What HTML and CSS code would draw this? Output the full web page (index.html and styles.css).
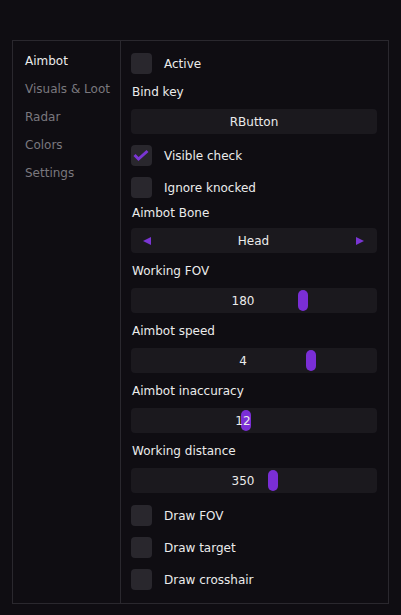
FILE: index.html
```html
<!DOCTYPE html>
<html>
<head>
<meta charset="utf-8">
<link rel="stylesheet" href="styles.css">
</head>
<body>
<div class="window">
  <nav class="sidebar">
    <div class="tab active">Aimbot</div>
    <div class="tab">Visuals &amp; Loot</div>
    <div class="tab">Radar</div>
    <div class="tab">Colors</div>
    <div class="tab">Settings</div>
  </nav>
  <main class="content">
    <div class="check"><span class="box"></span><span class="check-label">Active</span></div>
    <div class="group">
      <div class="field-label">Bind key</div>
      <div class="frame button">RButton</div>
    </div>
    <div class="check"><span class="box"><svg width="21" height="21" viewBox="0 0 21 21"><polyline points="3.5,10 7.5,14 16.5,6" fill="none" stroke="#7a35d3" stroke-width="3" stroke-linejoin="miter" stroke-linecap="butt"/></svg></span><span class="check-label">Visible check</span></div>
    <div class="check"><span class="box"></span><span class="check-label">Ignore knocked</span></div>
    <div class="group after-check combo-group">
      <div class="field-label">Aimbot Bone</div>
      <div class="frame combo">
        <svg class="arrow" width="8" height="8" viewBox="0 0 8 8"><polygon points="8,0 8,8 0,4" fill="#7a35d3"/></svg>
        <span>Head</span>
        <svg class="arrow" width="8" height="8" viewBox="0 0 8 8"><polygon points="0,0 0,8 8,4" fill="#7a35d3"/></svg>
      </div>
    </div>
    <div class="group">
      <div class="field-label">Working FOV</div>
      <div class="frame slider"><span class="thumb" style="left:167px"></span><span class="value">180</span></div>
    </div>
    <div class="group">
      <div class="field-label">Aimbot speed</div>
      <div class="frame slider"><span class="thumb" style="left:175px"></span><span class="value">4</span></div>
    </div>
    <div class="group">
      <div class="field-label">Aimbot inaccuracy</div>
      <div class="frame slider"><span class="thumb" style="left:110px"></span><span class="value">12</span></div>
    </div>
    <div class="group">
      <div class="field-label">Working distance</div>
      <div class="frame slider"><span class="thumb" style="left:137px"></span><span class="value">350</span></div>
    </div>
    <div class="check after-group"><span class="box"></span><span class="check-label">Draw FOV</span></div>
    <div class="check"><span class="box"></span><span class="check-label">Draw target</span></div>
    <div class="check"><span class="box"></span><span class="check-label">Draw crosshair</span></div>
  </main>
</div>
</body>
</html>
```

FILE: styles.css
```css
html, body {
  margin: 0;
  padding: 0;
  background: #0f0d12;
}
body {
  padding: 40px 12px 0 12px;
  font-family: "DejaVu Sans", sans-serif;
  font-size: 12px;
  color: #ebebeb;
}
.window {
  box-sizing: border-box;
  width: 377px;
  height: 564px;
  border: 1px solid #2a282e;
  background: #0f0d12;
  display: flex;
}
.sidebar {
  box-sizing: border-box;
  width: 108px;
  border-right: 1px solid #2a282e;
  padding: 13px 0 0 12px;
  display: flex;
  flex-direction: column;
  gap: 14px;
}
.tab {
  height: 14px;
  line-height: 14px;
  color: #7a787e;
  white-space: nowrap;
}
.tab.active {
  color: #ebebeb;
}
.content {
  flex: 1;
  padding: 12px 11px 0 10px;
  display: flex;
  flex-direction: column;
  gap: 11px;
}
.check {
  display: flex;
  align-items: center;
  height: 21px;
  gap: 12px;
}
.box {
  width: 21px;
  height: 21px;
  border-radius: 4px;
  background: #29272d;
  display: block;
}
.box svg {
  display: block;
}
.check-label {
  line-height: 14px;
}
.group {
  display: flex;
  flex-direction: column;
  gap: 10px;
}
.group.after-check {
  margin-top: -3px;
}
.group.combo-group {
  gap: 8px;
}
.check.after-group {
  margin-top: 1px;
}
.field-label {
  height: 14px;
  line-height: 14px;
  padding-left: 1px;
}
.frame {
  position: relative;
  height: 25px;
  border-radius: 4px;
  background: #1b191e;
  display: flex;
  align-items: center;
  justify-content: center;
}
.combo {
  justify-content: space-between;
  padding: 0 13px 0 12px;
}
.arrow {
  display: block;
}
.slider {
  padding-right: 22px;
}
.thumb {
  position: absolute;
  top: 2px;
  width: 10px;
  height: 21px;
  border-radius: 5px;
  background: #7a2ed6;
}
.value {
  position: relative;
}
```
